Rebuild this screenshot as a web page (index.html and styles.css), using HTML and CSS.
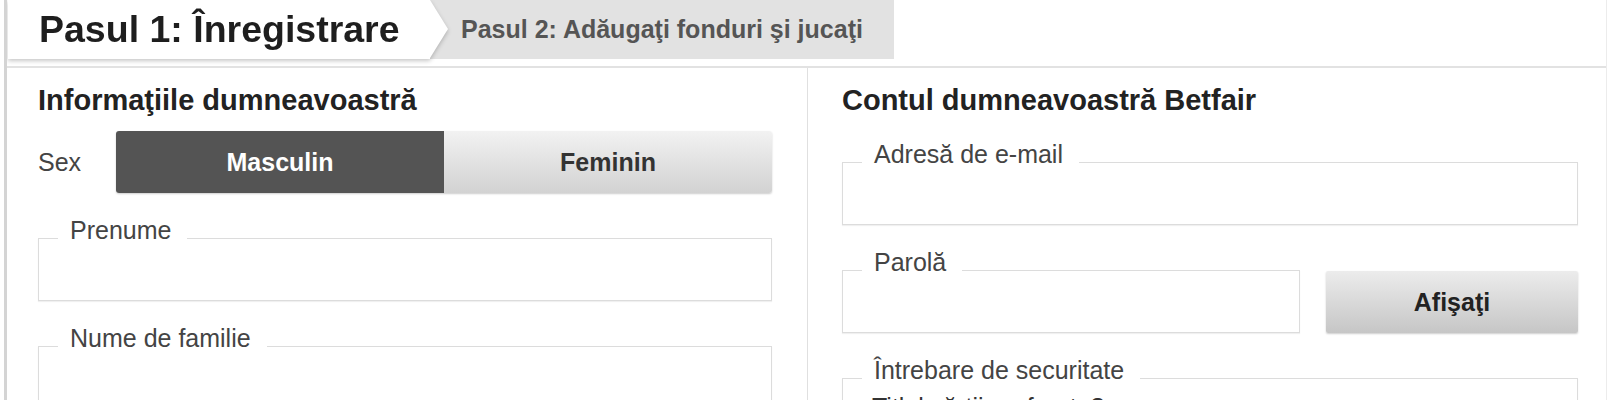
FILE: index.html
```html
<!DOCTYPE html>
<html lang="ro">
<head>
	<meta charset="UTF-8">
	<meta name="viewport" content="width=device-width, initial-scale=1.0">
	<title>Înregistrare</title>
	<link rel="stylesheet" href="styles.css">
</head>
<body>
	<div class="reg_con">
		<div class="steps">
			<div class="step step_on">Pasul 1: Înregistrare</div>
			<div class="step step_off">Pasul 2: Adăugaţi fonduri şi jucaţi</div>
		</div>
		<div class="form_con">
			<div class="col col_left">
				<h2>Informaţiile dumneavoastră</h2>
				<div class="sex_row">
					<span class="sex_label">Sex</span>
					<div class="switch">
						<div class="switch_item switch_on">Masculin</div>
						<div class="switch_item">Feminin</div>
					</div>
				</div>
				<fieldset class="field">
					<legend>Prenume</legend>
					<div class="field_input"></div>
				</fieldset>
				<fieldset class="field">
					<legend>Nume de familie</legend>
					<div class="field_input"></div>
				</fieldset>
			</div>
			<div class="col col_right">
				<h2>Contul dumneavoastră Betfair</h2>
				<fieldset class="field">
					<legend>Adresă de e-mail</legend>
					<div class="field_input"></div>
				</fieldset>
				<div class="pass_row">
					<fieldset class="field">
						<legend>Parolă</legend>
						<div class="field_input"></div>
					</fieldset>
					<div class="show_btn">Afişaţi</div>
				</div>
				<fieldset class="field">
					<legend>Întrebare de securitate</legend>
					<div class="field_input field_select">Titlul cărţii preferate?</div>
				</fieldset>
			</div>
		</div>
	</div>
</body>
</html>
```

FILE: styles.css
```css
body,h2,fieldset,legend{
	margin:0;
	padding:0;
}

body{
	background-color:#fff;
	font-family:"Liberation Sans", Arial, sans-serif;
	color:#333;
}

.reg_con{
	margin:0 3px 0 4px;
	height:400px;
	border-left:3px solid #d4d4d4;
	border-right:1px solid #ececec;
	overflow:hidden;
}

/* 步骤标签 */
.steps{
	display:flex;
	height:59px;
	margin:0 0 7px 1px;
}

.step{
	display:flex;
	align-items:center;
	height:59px;
	box-sizing:border-box;
	font-weight:bold;
}

.step_on{
	width:422px;
	padding-left:31px;
	font-size:37.5px;
	color:#1e1e1e;
	background-color:#fff;
	position:relative;
	z-index:2;
	filter:drop-shadow(0 2px 2px rgba(0,0,0,0.22));
}

.step_on::after{
	content:"";
	position:absolute;
	left:100%;
	top:0;
	border-left:18px solid #fff;
	border-top:29.5px solid transparent;
	border-bottom:29.5px solid transparent;
}

.step_off{
	padding:0 31px 0 31px;
	font-size:25px;
	color:#555;
	background-color:#e2e2e2;
}

/* 表单区 */
.form_con{
	display:flex;
	border-top:2px solid #e2e2e2;
	height:400px;
}

.col{
	box-sizing:border-box;
}

.col_left{
	width:801px;
	padding:0 35px 0 31px;
	border-right:1px solid #e0e0e0;
}

.col_right{
	flex:1;
	padding:0 28px 0 34px;
}

.col h2{
	margin-top:15px;
	font-size:29px;
	line-height:34px;
	color:#222;
}

.sex_row{
	display:flex;
	align-items:center;
	margin-top:14px;
}

.sex_label{
	width:78px;
	font-size:25px;
	color:#444;
}

.switch{
	flex:1;
	display:flex;
	height:62px;
	border-radius:3px;
	overflow:hidden;
	box-shadow:0 1px 2px rgba(0,0,0,0.2);
}

.switch_item{
	flex:1;
	display:flex;
	align-items:center;
	justify-content:center;
	font-size:25px;
	font-weight:bold;
	color:#333;
	background:linear-gradient(#f2f2f2, #d2d2d2);
}

.switch_on{
	color:#fff;
	background:#545454;
}

.field{
	display:block;
	margin-top:25px;
	border:1px solid #dcdcdc;
	box-shadow:0 1px 1px rgba(0,0,0,0.06);
	min-width:0;
}

.field legend{
	margin-left:19px;
	padding:0 16px 16px 12px;
	font-size:25px;
	line-height:25px;
	color:#444;
}

.field_input{
	height:61px;
	margin-top:-20px;
}

.field_select{
	box-sizing:border-box;
	padding:13px 0 0 29px;
	font-size:25px;
	line-height:30px;
	color:#333;
}

.pass_row{
	display:flex;
	align-items:flex-end;
	gap:26px;
}

.pass_row .field{
	flex:1;
}

.show_btn{
	width:252px;
	height:62px;
	display:flex;
	align-items:center;
	justify-content:center;
	font-size:25px;
	font-weight:bold;
	color:#222;
	border-radius:2px;
	background:linear-gradient(#ececec, #c6c6c6);
	box-shadow:0 1px 2px rgba(0,0,0,0.2);
}
```
